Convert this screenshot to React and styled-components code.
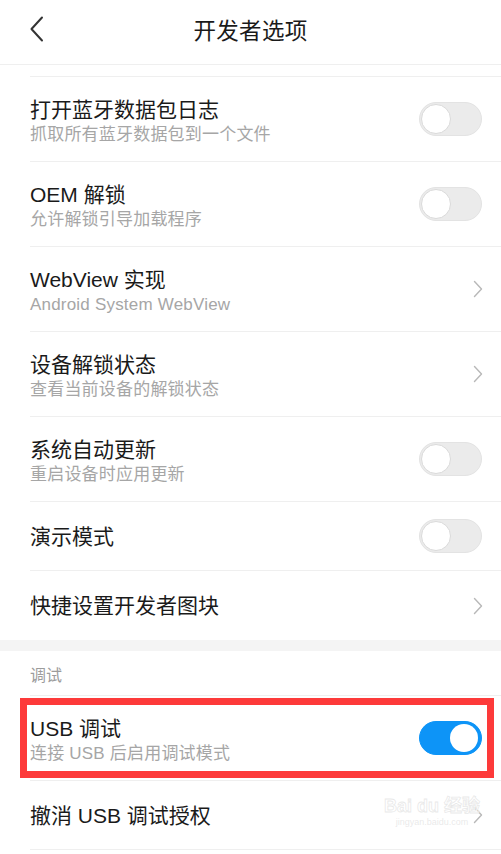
import React from "react";
import styled, { createGlobalStyle } from "styled-components";

const Global = createGlobalStyle`
  html, body { margin: 0; padding: 0; background: #fff; }
  body { width: 501px; height: 854px; overflow: hidden;
    font-family: "Liberation Sans", "Noto Sans CJK SC", "Noto Sans", sans-serif; -webkit-font-smoothing: antialiased; }
  * { box-sizing: border-box; }
`;

const Page = styled.div`
  width: 501px;
  height: 854px;
  background: #fff;
  position: relative;
  overflow: hidden;
`;

const Header = styled.header`
  height: 65px;
  border-bottom: 1px solid #efefef;
  display: flex;
  align-items: center;
  justify-content: center;
  position: relative;
  padding-bottom: 6px;
`;

const BackBtn = styled.div`
  position: absolute;
  left: 29px;
  top: 16px;
  width: 16px;
  height: 26px;
  display: flex;
`;

const Title = styled.h1`
  margin: 0;
  font-size: 22.5px;
  font-weight: 400;
  color: #1a1a1a;
  letter-spacing: 0.3px;
`;

const ClippedRow = styled.div`
  margin-left: 30px;
  height: 12px;
  border-bottom: 1px solid #efefef;
`;

const Row = styled.div`
  position: relative;
  padding-left: 30px;
`;

const RowInner = styled.div`
  display: flex;
  align-items: center;
  min-height: ${(p) => (p.$sub ? 85 : 69)}px;
  padding-right: 19px;
  border-bottom: ${(p) => (p.$last ? "none" : "1px solid #efefef")};
`;

const Texts = styled.div`
  flex: 1;
  display: flex;
  flex-direction: column;
  padding-top: ${(p) => (p.$sub ? 4 : 1)}px;
`;

const RowTitle = styled.div`
  font-size: 21px;
  line-height: 28px;
  color: #1a1a1a;
`;

const RowSub = styled.div`
  font-size: 17px;
  line-height: 22px;
  color: #a6a6a6;
  letter-spacing: 0.2px;
`;

const Track = styled.div`
  width: 63px;
  height: 34px;
  border-radius: 17px;
  background: ${(p) => (p.$on ? "#0d94f7" : "#ebebeb")};
  border: 1px solid ${(p) => (p.$on ? "#0d94f7" : "#e3e3e3")};
  display: flex;
  align-items: center;
  justify-content: ${(p) => (p.$on ? "flex-end" : "flex-start")};
  padding: 0 1px;
`;

const Knob = styled.div`
  width: ${(p) => (p.$on ? 28 : 30)}px;
  height: ${(p) => (p.$on ? 28 : 30)}px;
  border-radius: 50%;
  background: #fff;
  border: ${(p) => (p.$on ? "none" : "1px solid #dadada")};
  margin: ${(p) => (p.$on ? "0 2px 0 0" : "0")};
`;

const Chevron = styled.svg`
  width: 10px;
  height: 18px;
  margin-right: -1px;
`;

const Band = styled.div`
  height: 11px;
  background: #f4f4f4;
`;

const SectionHeader = styled.div`
  margin-left: 30px;
  height: 45px;
  border-bottom: 1px solid #efefef;
  display: flex;
  align-items: center;
  padding-top: 2px;
  font-size: 16px;
  color: #9c9c9c;
`;

const Highlight = styled.div`
  position: absolute;
  left: 20px;
  right: 7px;
  top: 2px;
  bottom: 3px;
  border: 7px solid #fd3a3a;
  pointer-events: none;
`;

const Watermark = styled.div`
  position: absolute;
  left: 384px;
  top: 796px;
  display: flex;
  flex-direction: column;
  align-items: center;
  pointer-events: none;
`;

const WmTop = styled.div`
  font-family: "Liberation Sans", "Noto Sans CJK SC", sans-serif;
  font-weight: 700;
  font-size: 18px;
  line-height: 20px;
  color: rgba(255, 255, 255, 0.9);
  -webkit-text-stroke: 0.8px rgba(210, 210, 210, 0.5);
`;

const WmBottom = styled.div`
  font-family: "Liberation Sans", sans-serif;
  font-size: 9px;
  line-height: 12px;
  color: rgba(215, 215, 215, 0.55);
`;

function Toggle({ on }) {
  return (
    <Track $on={on}>
      <Knob $on={on} />
    </Track>
  );
}

function Arrow() {
  return (
    <Chevron viewBox="0 0 10 18">
      <path d="M1.5 1.5 L8.5 9 L1.5 16.5" fill="none" stroke="#b8b8b8" strokeWidth="1.4" strokeLinecap="round" strokeLinejoin="round" />
    </Chevron>
  );
}

function Item({ title, sub, control, last, children }) {
  return (
    <Row>
      <RowInner $sub={!!sub} $last={last}>
        <Texts $sub={!!sub}>
          <RowTitle>{title}</RowTitle>
          {sub && <RowSub>{sub}</RowSub>}
        </Texts>
        {control === "off" && <Toggle on={false} />}
        {control === "on" && <Toggle on />}
        {control === "arrow" && <Arrow />}
      </RowInner>
      {children}
    </Row>
  );
}

export default function App() {
  return (
    <>
      <Global />
      <Page>
        <Header>
          <BackBtn>
            <svg width="16" height="26" viewBox="0 0 16 26">
              <path d="M13 1.5 L2.5 13 L13 24.5" fill="none" stroke="#333" strokeWidth="2" strokeLinecap="round" strokeLinejoin="round" />
            </svg>
          </BackBtn>
          <Title>开发者选项</Title>
        </Header>
        <ClippedRow />
        <Item title="打开蓝牙数据包日志" sub="抓取所有蓝牙数据包到一个文件" control="off" />
        <Item title="OEM 解锁" sub="允许解锁引导加载程序" control="off" />
        <Item title="WebView 实现" sub="Android System WebView" control="arrow" />
        <Item title="设备解锁状态" sub="查看当前设备的解锁状态" control="arrow" />
        <Item title="系统自动更新" sub="重启设备时应用更新" control="off" />
        <Item title="演示模式" control="off" />
        <Item title="快捷设置开发者图块" control="arrow" last />
        <Band />
        <SectionHeader>调试</SectionHeader>
        <Item title="USB 调试" sub="连接 USB 后启用调试模式" control="on">
          <Highlight />
        </Item>
        <Item title="撤消 USB 调试授权" control="arrow" />
        <Watermark>
          <WmTop>Bai du 经验</WmTop>
          <WmBottom>jingyan.baidu.com</WmBottom>
        </Watermark>
      </Page>
    </>
  );
}
